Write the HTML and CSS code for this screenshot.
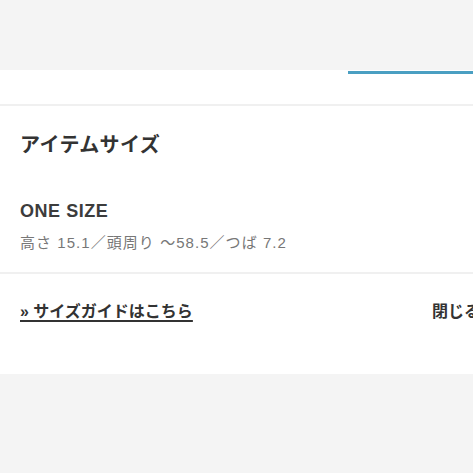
FILE: index.html
```html
<!DOCTYPE html>
<html lang="ja">
    <head>
        <meta charset="UTF-8">
        <meta name="viewport" content="width=device-width, initial-scale=1.0">
        <title>アイテムサイズ</title>
        <link rel="stylesheet" href="styles.css">
    </head>
    <body>
        <div class="topbar"></div>
        <div class="panel">
            <div class="tabs">
                <div class="tab"></div>
                <div class="tab active"></div>
            </div>
            <section class="size-info">
                <h2 class="title">アイテムサイズ</h2>
                <p class="size-name">ONE SIZE</p>
                <p class="size-detail">高さ 15.1／頭周り 〜58.5／つば 7.2</p>
            </section>
            <div class="footer">
                <a href="#" class="guide-link">» サイズガイドはこちら</a>
                <a href="#" class="close-link">閉じる</a>
            </div>
        </div>
    </body>
</html>
```

FILE: styles.css
```css
/* General Styles */
body {
    margin: 0;
    padding: 0;
    background-color: #f4f4f4;
    font-family: 'Liberation Sans', 'Noto Sans CJK JP', sans-serif;
    color: #333;
    overflow: hidden;
}

.topbar {
    height: 70px;
}

.panel {
    background-color: white;
}

.tabs {
    display: flex;
    height: 34px;
    border-bottom: 2px solid #f0f0f0;
}

.tab {
    flex: 1;
}

.tab.active {
    flex: 0 0 125px;
    border-top: 3px solid #4a9fc2;
    margin-top: 1px;
}

.size-info {
    padding: 25px 20px 19px;
    border-bottom: 2px solid #f0f0f0;
}

.title {
    margin: 0 0 40px;
    font-size: 20px;
    line-height: 28px;
    font-weight: bold;
    letter-spacing: 0.02em;
}

.size-name {
    margin: 0 0 10px;
    font-size: 18px;
    line-height: 24px;
    font-weight: bold;
    letter-spacing: 0.03em;
    color: #3c3c3c;
}

.size-detail {
    margin: 0;
    font-size: 15px;
    line-height: 20px;
    letter-spacing: 0.07em;
    color: #777;
}

.footer {
    display: flex;
    justify-content: space-between;
    padding: 27px 0 51px 20px;
    margin-right: -7px;
}

.guide-link, .close-link {
    font-size: 16px;
    line-height: 22px;
    font-weight: bold;
    color: #333;
    text-decoration: none;
}

.guide-link {
    text-decoration: underline;
    text-decoration-thickness: 2px;
    text-underline-offset: 3px;
}
```
